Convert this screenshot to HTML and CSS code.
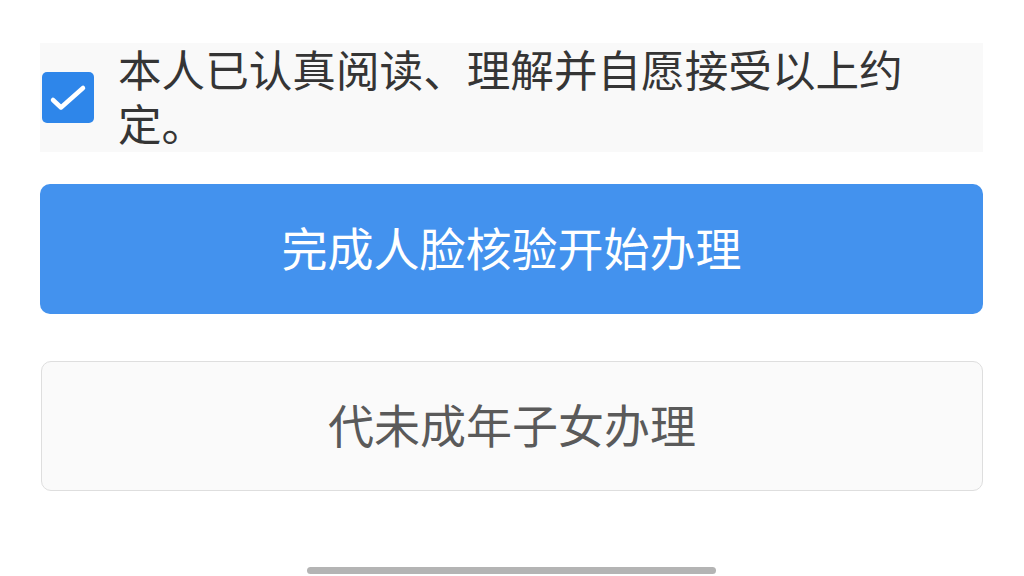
FILE: index.html
```html
<!DOCTYPE html>
<html lang="zh-CN">
<head>
<meta charset="utf-8">
<title>办理</title>
<link rel="stylesheet" href="styles.css">
</head>
<body>
<main class="page">
  <section class="agree">
    <span class="checkbox">
      <svg viewBox="0 0 52 51" width="52" height="51">
        <path d="M11 28 L19 35.5 L41 16" fill="none" stroke="#fff" stroke-width="4.5" stroke-linecap="round" stroke-linejoin="round"/>
      </svg>
    </span>
    <p class="agree-text">本人已认真阅读、理解并自愿接受以上约定。</p>
  </section>
  <button class="btn btn-primary">完成人脸核验开始办理</button>
  <button class="btn btn-secondary">代未成年子女办理</button>
</main>
<div class="home-indicator"></div>
</body>
</html>
```
FILE: styles.css
```css
html, body {
  margin: 0;
  padding: 0;
  background: #ffffff;
  width: 1024px;
  height: 576px;
  overflow: hidden;
  font-family: "Noto Sans CJK SC", "Noto Sans", sans-serif;
}

.page {
  padding: 43px 41px 0 40px;
  display: flex;
  flex-direction: column;
}

.agree {
  display: flex;
  align-items: center;
  background: #f9f9f9;
  height: 109px;
  padding-left: 2px;
}

.checkbox {
  flex: none;
  width: 52px;
  height: 51px;
  background: #2e86ea;
  border-radius: 5px;
  display: flex;
}

.agree-text {
  margin: 0 0 0 24px;
  padding: 0 60px 6px 0;
  font-size: 43.6px;
  line-height: 54px;
  color: #353535;
}

.btn {
  display: block;
  width: 100%;
  height: 130px;
  border-radius: 10px;
  font-family: inherit;
  font-size: 46px;
  padding: 0 0 7px 0;
  margin: 0;
}

.btn-primary {
  margin-top: 32px;
  background: #4392ee;
  color: #ffffff;
  border: none;
}

.btn-secondary {
  margin-top: 47px;
  margin-left: 1px;
  width: calc(100% - 1px);
  background: #fafafa;
  color: #5a5a5a;
  border: 1.5px solid #dedede;
}

.home-indicator {
  position: absolute;
  left: 307px;
  top: 567px;
  width: 409px;
  height: 7px;
  border-radius: 4px;
  background: #b4b4b4;
}
```
